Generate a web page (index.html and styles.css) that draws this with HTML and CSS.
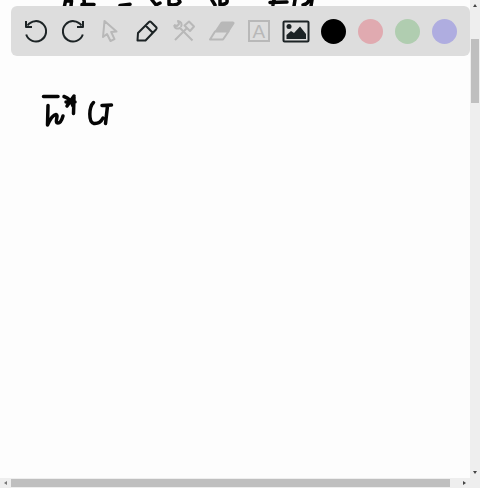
FILE: index.html
```html
<!DOCTYPE html>
<html lang="en">
<head>
<meta charset="utf-8">
<title>Whiteboard</title>
<link rel="stylesheet" href="styles.css">
</head>
<body>
<div class="app">
  <main class="board">
    <svg class="ink" viewBox="0 0 470 478" aria-hidden="true">
      <g class="previous">
        <path d="M64.500 6L65.500 1H71.500L71 6M82 6Q85 4 84 0M82 4.500L94 4.500M120 5.500L130 4.300"/>
        <path d="M152 0L156 5L160 3M169 0L169 4.500Q177 6 180 2L179 0M212 0L215 5M220 0L220 5M222 4.500Q228 4 227 0M270 2.500L287 2M274 0L273 5M295 0L294 6M303 5Q308 4 309 0M312 0L311 6"/>
      </g>
      <path d="M43.500 96.500H58M48 105.500L47.500 125Q52 115 56 114.500C59 115 54 123 58 123Q61 123 63 116"/>
      <path d="M64 96.500Q71 99 73 106M74 96L67 106M66 102L75 102M74 97L73.500 113.500"/>
      <path d="M93.500 102.500C89 107 88 122 94 123.500Q100 124 103 118M102 105.500L111.500 105M107.500 106L105.500 123.500"/>
    </svg>
    <header class="toolbar">
      <button class="tool" aria-label="Undo"><svg viewBox="0 0 28 28"><path d="M4.200 17.500A10.200 10.200 0 1 0 5.500 8.500M4 4V10H10"/></svg></button>
      <button class="tool" aria-label="Redo"><svg viewBox="0 0 28 28"><path d="M23.800 17.500A10.200 10.200 0 1 1 22.500 8.500M24 4V10H18"/></svg></button>
      <button class="tool off" aria-label="Select"><svg viewBox="0 0 28 28"><path d="M8.500 4L7 20L11 17L14.500 24L18.500 22.200L15.200 15L20.500 14.500Z"/></svg></button>
      <button class="tool" aria-label="Pen"><svg viewBox="0 0 28 28"><path d="M4.500 23.500L5 16L16 5Q17 4 18 5L23.500 10.500Q24 11.500 23 12.500L12.500 23.500ZM12.500 8.500L19.500 15.500"/></svg></button>
      <button class="tool off" aria-label="Tools"><svg viewBox="0 0 28 28"><path d="M5 23L17 11M4 8Q5 13 10 11L22.500 23.500M4 8L7 9L9 7L8 4Q13 5 11 10M14.500 8.500L19 4.500L24 9.500L20 14Z"/></svg></button>
      <button class="tool off" aria-label="Eraser"><svg viewBox="0 0 28 28"><path d="M2 22.500L7 14.500H20.500L15 22.500Z"/><path class="fill" d="M6.500 14.500L12.500 5.500Q13 4.500 14.500 4.500H25Q27 5 26.500 6.500L21 15Z"/></svg></button>
      <button class="tool off letter" aria-label="Text"><span>A</span></button>
      <button class="tool picture" aria-label="Image"><svg viewBox="0 0 28 28"><rect x="1.500" y="4.500" width="25" height="20" rx="1"/><circle class="fill" cx="7" cy="9.500" r="2.500"/><path class="fill" d="M4.500 22V18L9 14L12 16L18 9.500L24 17V22Z"/></svg></button>
      <button class="color black" aria-label="Black"></button>
      <button class="color red" aria-label="Red"></button>
      <button class="color green" aria-label="Green"></button>
      <button class="color blue" aria-label="Blue"></button>
    </header>
  </main>
  <div class="vertical"><i class="arrow up"></i><i class="thumb"></i><i class="arrow down"></i></div>
  <div class="horizontal"><i class="arrow left"></i><i class="thumb"></i><i class="arrow right"></i></div>
  <div class="corner"></div>
</div>
</body>
</html>
```

FILE: styles.css
```css
* { box-sizing: border-box; }
body { margin: 0; overflow: hidden; background: #fdfdfd; font-family: "Liberation Sans", Arial, sans-serif; }
.app { width: 480px; height: 488px; display: grid; grid-template: 478px 10px / 470px 10px; }
.board { position: relative; padding: 6px 0 0 11px; background: #fdfdfd; }
.ink { position: absolute; top: 0; left: 0; width: 470px; height: 478px; fill: none; stroke: #050505; stroke-width: 3.5; stroke-linecap: round; stroke-linejoin: round; }
.toolbar { position: relative; width: 459px; height: 50px; display: grid; grid-template-columns: repeat(12, 37.2px); align-items: center; justify-content: start; padding-left: 6px; border-radius: 6px; background: #ddd; }
.tool, .color { justify-self: center; padding: 0; border: 0; background: none; }
.tool { width: 28px; height: 28px; color: #1c2325; }
.tool svg { display: block; width: 28px; height: 28px; fill: none; stroke: currentColor; stroke-width: 2; stroke-linejoin: round; }
.tool .fill { fill: currentColor; stroke: none; }
.tool.off { color: #b8b8b8; }
.letter { display: grid; place-items: center; }
.letter span { width: 22px; height: 22px; border: 2px solid; font: 19px/19px "Liberation Sans", Arial, sans-serif; text-align: center; }
.color { width: 25px; height: 25px; border-radius: 50%; }
.black { background: #000; }
.red { background: #e0aab0; }
.green { background: #b0cdb0; }
.blue { background: #afade0; }
.vertical, .horizontal { display: flex; align-items: center; background: #eee; }
.vertical { flex-direction: column; }
.vertical .thumb { width: 8px; height: 64px; margin-top: 32px; background: #bfbfbf; }
.horizontal .thumb { width: 439px; height: 8px; margin-left: 4px; background: #bfbfbf; }
.arrow { width: 0; height: 0; border: 2px solid transparent; }
.up { margin-top: 4px; border-top: 0; border-bottom: 3px solid #444; }
.down { margin: auto 0 4px; border-bottom: 0; border-top: 3px solid #444; }
.left { margin-left: 4px; border-left: 0; border-right: 3px solid #777; }
.right { margin: 0 4px 0 auto; border-right: 0; border-left: 3px solid #444; }
.corner { background: #eee; }
```
